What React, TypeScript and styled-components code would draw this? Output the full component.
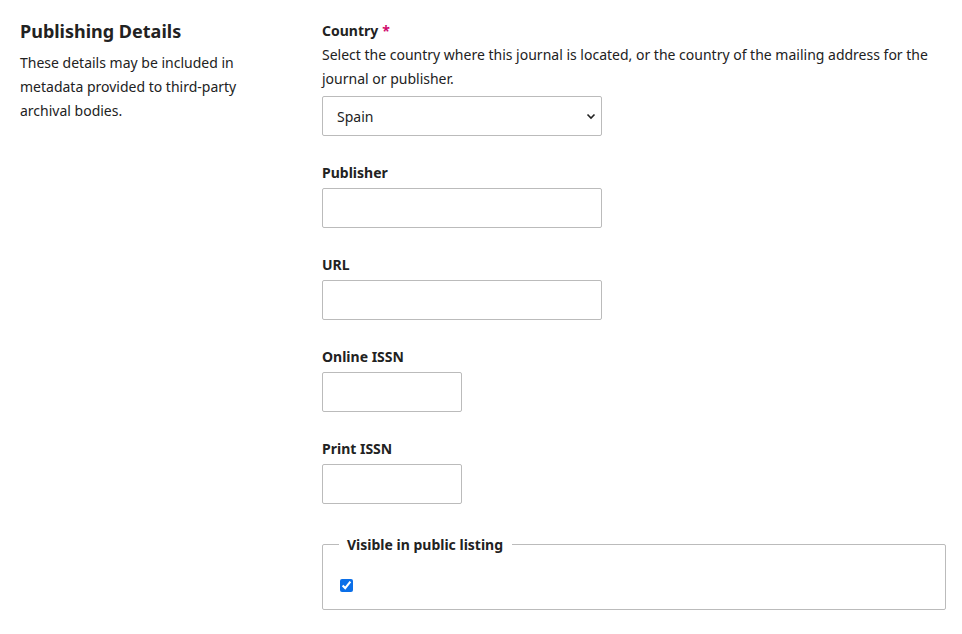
import React from "react";
import styled, { createGlobalStyle } from "styled-components";

const Global = createGlobalStyle`
  html, body { margin: 0; padding: 0; background: #fff; }
  body { font-family: "Noto Sans", sans-serif; color: #222; }
  * { box-sizing: border-box; }
`;

const Page = styled.div`
  display: flex;
  padding: 19px 16px 0 20px;
`;

const Side = styled.div`
  width: 302px;
  flex: none;
  padding-right: 52px;
`;

const Heading = styled.h2`
  margin: 0;
  font-size: 18px;
  line-height: 24px;
  font-weight: 700;
`;

const SideText = styled.p`
  margin: 8px 0 0;
  font-size: 14px;
  line-height: 24px;
`;

const Main = styled.div`
  width: 624px;
  display: flex;
  flex-direction: column;
  gap: 25px;
`;

const Field = styled.div`
  display: flex;
  flex-direction: column;
`;

const Label = styled.label`
  font-size: 14px;
  line-height: 24px;
  font-weight: 700;
  margin-bottom: 3px;
`;

const Required = styled.span`
  color: #d00a6c;
  margin-left: 4px;
`;

const Help = styled.div`
  font-size: 14px;
  line-height: 24px;
  margin-top: -3px;
  margin-bottom: 5px;
`;

const SelectBox = styled.div`
  position: relative;
  width: 280px;
  height: 40px;
`;

const Select = styled.select`
  appearance: none;
  width: 100%;
  height: 40px;
  border: 1px solid #bbb;
  border-radius: 2px;
  background: #fff;
  padding: 0 30px 0 14px;
  font-family: "Noto Sans", sans-serif;
  font-size: 14px;
  color: #222;
`;

const Chevron = styled.svg`
  position: absolute;
  right: 6px;
  top: 16px;
  pointer-events: none;
`;

const Input = styled.input<{ $w: number }>`
  width: ${(p) => p.$w}px;
  height: 40px;
  border: 1px solid #bbb;
  border-radius: 2px;
  background: #fff;
  padding: 0 14px;
  font-family: "Noto Sans", sans-serif;
  font-size: 14px;
`;

const Fieldset = styled.fieldset`
  margin: 3px 0 0;
  border: 1px solid #bbb;
  border-radius: 2px;
  padding: 4px 15px 15px 16px;
  height: 78px;
`;

const Legend = styled.legend`
  font-size: 14px;
  line-height: 20px;
  font-weight: 700;
  padding: 3px 9px 1px 8px;
`;

const Check = styled.input`
  margin: 19px 0 0 1px;
  width: 13px;
  height: 13px;
  display: block;
  accent-color: #0b6fe8;
`;

export default function App() {
  return (
    <>
      <Global />
      <Page>
        <Side>
          <Heading>Publishing Details</Heading>
          <SideText>
            These details may be included in metadata provided to third-party archival bodies.
          </SideText>
        </Side>
        <Main>
          <Field>
            <Label>
              Country<Required>*</Required>
            </Label>
            <Help>
              Select the country where this journal is located, or the country of the mailing address for the journal or publisher.
            </Help>
            <SelectBox>
              <Select defaultValue="ES">
                <option value="ES">Spain</option>
              </Select>
              <Chevron width="10" height="8" viewBox="0 0 10 8">
                <path d="M1.5 2.5 L5 6 L8.5 2.5" fill="none" stroke="#222" strokeWidth="1.6" />
              </Chevron>
            </SelectBox>
          </Field>
          <Field>
            <Label>Publisher</Label>
            <Input $w={280} />
          </Field>
          <Field>
            <Label>URL</Label>
            <Input $w={280} />
          </Field>
          <Field>
            <Label>Online ISSN</Label>
            <Input $w={140} />
          </Field>
          <Field>
            <Label>Print ISSN</Label>
            <Input $w={140} />
          </Field>
          <Fieldset>
            <Legend>Visible in public listing</Legend>
            <Check type="checkbox" defaultChecked />
          </Fieldset>
        </Main>
      </Page>
    </>
  );
}
